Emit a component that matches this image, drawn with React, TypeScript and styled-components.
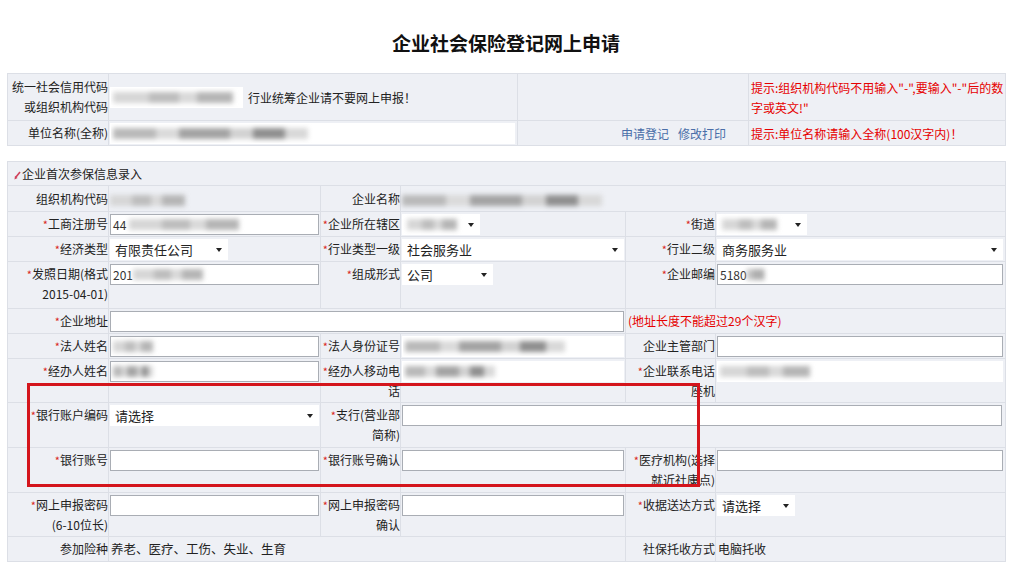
import React from 'react';
import styled, { createGlobalStyle } from 'styled-components';

const FONT = `"Noto Sans CJK SC", "Microsoft YaHei", sans-serif`;

const GlobalStyle = createGlobalStyle`
  html, body {
    margin: 0;
    padding: 0;
    background: #fff;
  }
  body {
    color: #222;
    font-family: ${FONT};
    font-size: 12px;
  }
`;

const Page = styled.div`
  box-sizing: border-box;
  height: 573px;
  overflow: hidden;
  padding: 0 5px 0 7px;
  position: relative;
  width: 1010px;
`;

const Title = styled.h1`
  color: #111;
  font-size: 19px;
  font-weight: bold;
  height: 30px;
  line-height: 30px;
  margin: 28px 0 15px;
  text-align: center;
`;

const Table = styled.table<{ $mt?: number }>`
  border: 1px solid #c8ccd5;
  border-collapse: collapse;
  margin-top: ${(p) => p.$mt ?? 0}px;
  table-layout: fixed;
  width: 998px;
`;

const Row = styled.tr<{ $h: number }>`
  height: ${(p) => p.$h}px;
`;

const Cell = styled.td<{ $middle?: boolean }>`
  background: #eef0f5;
  border: 1px solid #dcdfe6;
  line-height: 20px;
  padding: 2px 1px 1px;
  vertical-align: ${(p) => (p.$middle ? 'middle' : 'top')};
`;

// labels sit a little lower than the boxes beside them
const Label = styled(Cell)`
  padding-right: 0;
  padding-top: ${(p) => (p.$middle ? 1 : 2)}px;
  text-align: right;
`;

const Star = styled.span`
  color: #d9261c;
  font-size: 11px;
`;

const Hint = styled(Cell)`
  color: #e60000;
  padding-left: 2px;
`;

const HeaderCell = styled(Cell)`
  padding-left: 6px;
`;

const HeaderIcon = styled.svg`
  margin-right: 1px;
  vertical-align: -1px;
`;

const Inline = styled.div`
  align-items: center;
  display: flex;
  gap: 5px;
`;

const Field = styled.div<{ $w: number; $bare?: boolean }>`
  align-items: center;
  background: #fff;
  border: 1px solid ${(p) => (p.$bare ? '#fff' : '#a9adb4')};
  box-sizing: border-box;
  color: #333;
  display: flex;
  font-size: 12px;
  height: 21px;
  overflow: hidden;
  padding: 0 2px;
  white-space: nowrap;
  width: ${(p) => p.$w}px;
`;

const Select = styled.div<{ $w: number }>`
  align-items: center;
  background: #fff;
  box-sizing: border-box;
  color: #222;
  display: flex;
  font-size: 13px;
  height: 21px;
  justify-content: space-between;
  padding: 0 6px 0 5px;
  white-space: nowrap;
  width: ${(p) => p.$w}px;

  &::after {
    border-left: 3.5px solid transparent;
    border-right: 3.5px solid transparent;
    border-top: 4px solid #222;
    content: '';
    flex: none;
  }
`;

const Blur = styled.span<{ $w: number; $dark?: boolean }>`
  background: ${(p) =>
    p.$dark
      ? 'linear-gradient(90deg, #b9b9b9 0 22%, #dadada 22% 34%, #a3a3a3 34% 60%, #d2d2d2 60% 72%, #8f8f8f 72% 88%, #d8d8d8 88%)'
      : 'linear-gradient(90deg, #d6d6d6 0 30%, #bdbdbd 30% 55%, #d9d9d9 55% 70%, #b5b5b5 70% 100%)'};
  display: inline-block;
  filter: blur(2.5px);
  flex: none;
  height: 11px;
  vertical-align: middle;
  width: ${(p) => p.$w}px;
`;

const Links = styled(Cell)`
  padding-right: 22px;
  text-align: right;
`;

const Link = styled.a`
  color: #4a6ea8;
  cursor: pointer;
  margin-left: 9px;
`;

const Plain = styled.span<{ $size?: number }>`
  color: #222;
  font-size: ${(p) => p.$size ?? 12}px;
  padding-left: 1px;
`;

const Marker = styled.div`
  border: 3px solid #d4151c;
  box-sizing: border-box;
  height: 104px;
  left: 27px;
  pointer-events: none;
  position: absolute;
  top: 383px;
  width: 673px;
`;

const S = () => <Star>*</Star>;

export default function App() {
  return (
    <Page>
      <GlobalStyle />
      <Title>企业社会保险登记网上申请</Title>

      <Table>
        <colgroup>
          <col style={{ width: 101 }} />
          <col style={{ width: 409 }} />
          <col style={{ width: 231 }} />
          <col style={{ width: 257 }} />
        </colgroup>
        <tbody>
          <Row $h={47}>
            <Label $middle>
              统一社会信用代码
              <br />
              或组织机构代码
            </Label>
            <Cell $middle>
              <Inline>
                <Field $w={133} $bare>
                  <Blur $w={120} />
                </Field>
                <span>行业统筹企业请不要网上申报！</span>
              </Inline>
            </Cell>
            <Cell />
            <Hint $middle>
              提示:组织机构代码不用输入"-",要输入"-"后的数
              <br />
              字或英文!"
            </Hint>
          </Row>
          <Row $h={25}>
            <Label $middle>单位名称(全称)</Label>
            <Cell $middle>
              <Field $w={405} $bare>
                <Blur $w={195} $dark />
              </Field>
            </Cell>
            <Links $middle>
              <Link>申请登记</Link>
              <Link>修改打印</Link>
            </Links>
            <Hint $middle>提示:单位名称请输入全称(100汉字内)！</Hint>
          </Row>
        </tbody>
      </Table>

      <Table $mt={15}>
        <colgroup>
          <col style={{ width: 101 }} />
          <col style={{ width: 212 }} />
          <col style={{ width: 80 }} />
          <col style={{ width: 225 }} />
          <col style={{ width: 90 }} />
          <col style={{ width: 290 }} />
        </colgroup>
        <tbody>
          <Row $h={22}>
            <HeaderCell colSpan={6} $middle>
              <HeaderIcon width="7" height="9" viewBox="0 0 7 9">
                <path d="M6 1 L2 6" stroke="#d0405a" strokeWidth="1.6" fill="none" />
                <path d="M0.5 8.5 L1 4.8 L3.6 7 Z" fill="#d0405a" />
              </HeaderIcon>
              企业首次参保信息录入
            </HeaderCell>
          </Row>
          <Row $h={26}>
            <Label $middle>组织机构代码</Label>
            <Cell $middle>
              <Blur $w={75} />
            </Cell>
            <Label $middle>企业名称</Label>
            <Cell colSpan={3} $middle>
              <Blur $w={200} $dark />
            </Cell>
          </Row>
          <Row $h={25}>
            <Label>
              <S />
              工商注册号
            </Label>
            <Cell>
              <Field $w={209}>
                44&nbsp;
                <Blur $w={110} />
              </Field>
            </Cell>
            <Label>
              <S />
              企业所在辖区
            </Label>
            <Cell>
              <Select $w={78}>
                <Blur $w={50} />
              </Select>
            </Cell>
            <Label>
              <S />
              街道
            </Label>
            <Cell>
              <Select $w={90}>
                <Blur $w={55} />
              </Select>
            </Cell>
          </Row>
          <Row $h={25}>
            <Label>
              <S />
              经济类型
            </Label>
            <Cell>
              <Select $w={118}>有限责任公司</Select>
            </Cell>
            <Label>
              <S />
              行业类型一级
            </Label>
            <Cell>
              <Select $w={222}>社会服务业</Select>
            </Cell>
            <Label>
              <S />
              行业二级
            </Label>
            <Cell>
              <Select $w={286}>商务服务业</Select>
            </Cell>
          </Row>
          <Row $h={47}>
            <Label>
              <S />
              发照日期(格式
              <br />
              2015-04-01)
            </Label>
            <Cell>
              <Field $w={209}>
                201
                <Blur $w={70} />
              </Field>
            </Cell>
            <Label>
              <S />
              组成形式
            </Label>
            <Cell>
              <Select $w={91}>公司</Select>
            </Cell>
            <Label>
              <S />
              企业邮编
            </Label>
            <Cell>
              <Field $w={286}>
                5180
                <Blur $w={18} $dark />
              </Field>
            </Cell>
          </Row>
          <Row $h={24}>
            <Label>
              <S />
              企业地址
            </Label>
            <Cell colSpan={3}>
              <Field $w={514} />
            </Cell>
            <Hint colSpan={2}>(地址长度不能超过29个汉字)</Hint>
          </Row>
          <Row $h={25}>
            <Label>
              <S />
              法人姓名
            </Label>
            <Cell>
              <Field $w={209}>
                <Blur $w={40} />
              </Field>
            </Cell>
            <Label>
              <S />
              法人身份证号
            </Label>
            <Cell>
              <Field $w={222} $bare>
                <Blur $w={160} $dark />
              </Field>
            </Cell>
            <Label>企业主管部门</Label>
            <Cell>
              <Field $w={286} />
            </Cell>
          </Row>
          <Row $h={44}>
            <Label>
              <S />
              经办人姓名
            </Label>
            <Cell>
              <Field $w={209}>
                <Blur $w={40} $dark />
              </Field>
            </Cell>
            <Label>
              <S />
              经办人移动电
              <br />
              话
            </Label>
            <Cell>
              <Field $w={222} $bare>
                <Blur $w={90} $dark />
              </Field>
            </Cell>
            <Label>
              <S />
              企业联系电话
              <br />
              座机
            </Label>
            <Cell>
              <Field $w={286} $bare>
                <Blur $w={90} />
              </Field>
            </Cell>
          </Row>
          <Row $h={45}>
            <Label>
              <S />
              银行账户编码
            </Label>
            <Cell>
              <Select $w={209}>请选择</Select>
            </Cell>
            <Label>
              <S />
              支行(营业部
              <br />
              简称)
            </Label>
            <Cell colSpan={3}>
              <Field $w={600} />
            </Cell>
          </Row>
          <Row $h={45}>
            <Label>
              <S />
              银行账号
            </Label>
            <Cell>
              <Field $w={209} />
            </Cell>
            <Label>
              <S />
              银行账号确认
            </Label>
            <Cell>
              <Field $w={222} />
            </Cell>
            <Label>
              <S />
              医疗机构(选择
              <br />
              就近社康点)
            </Label>
            <Cell>
              <Field $w={286} />
            </Cell>
          </Row>
          <Row $h={43}>
            <Label>
              <S />
              网上申报密码
              <br />
              (6-10位长)
            </Label>
            <Cell>
              <Field $w={209} />
            </Cell>
            <Label>
              <S />
              网上申报密码
              <br />
              确认
            </Label>
            <Cell>
              <Field $w={222} />
            </Cell>
            <Label>
              <S />
              收据送达方式
            </Label>
            <Cell>
              <Select $w={78}>请选择</Select>
            </Cell>
          </Row>
          <Row $h={25}>
            <Label>参加险种</Label>
            <Cell colSpan={3}>
              <Plain $size={12.5}>养老、医疗、工伤、失业、生育</Plain>
            </Cell>
            <Label>社保托收方式</Label>
            <Cell>
              <Plain>电脑托收</Plain>
            </Cell>
          </Row>
        </tbody>
      </Table>

      <Marker />
    </Page>
  );
}
